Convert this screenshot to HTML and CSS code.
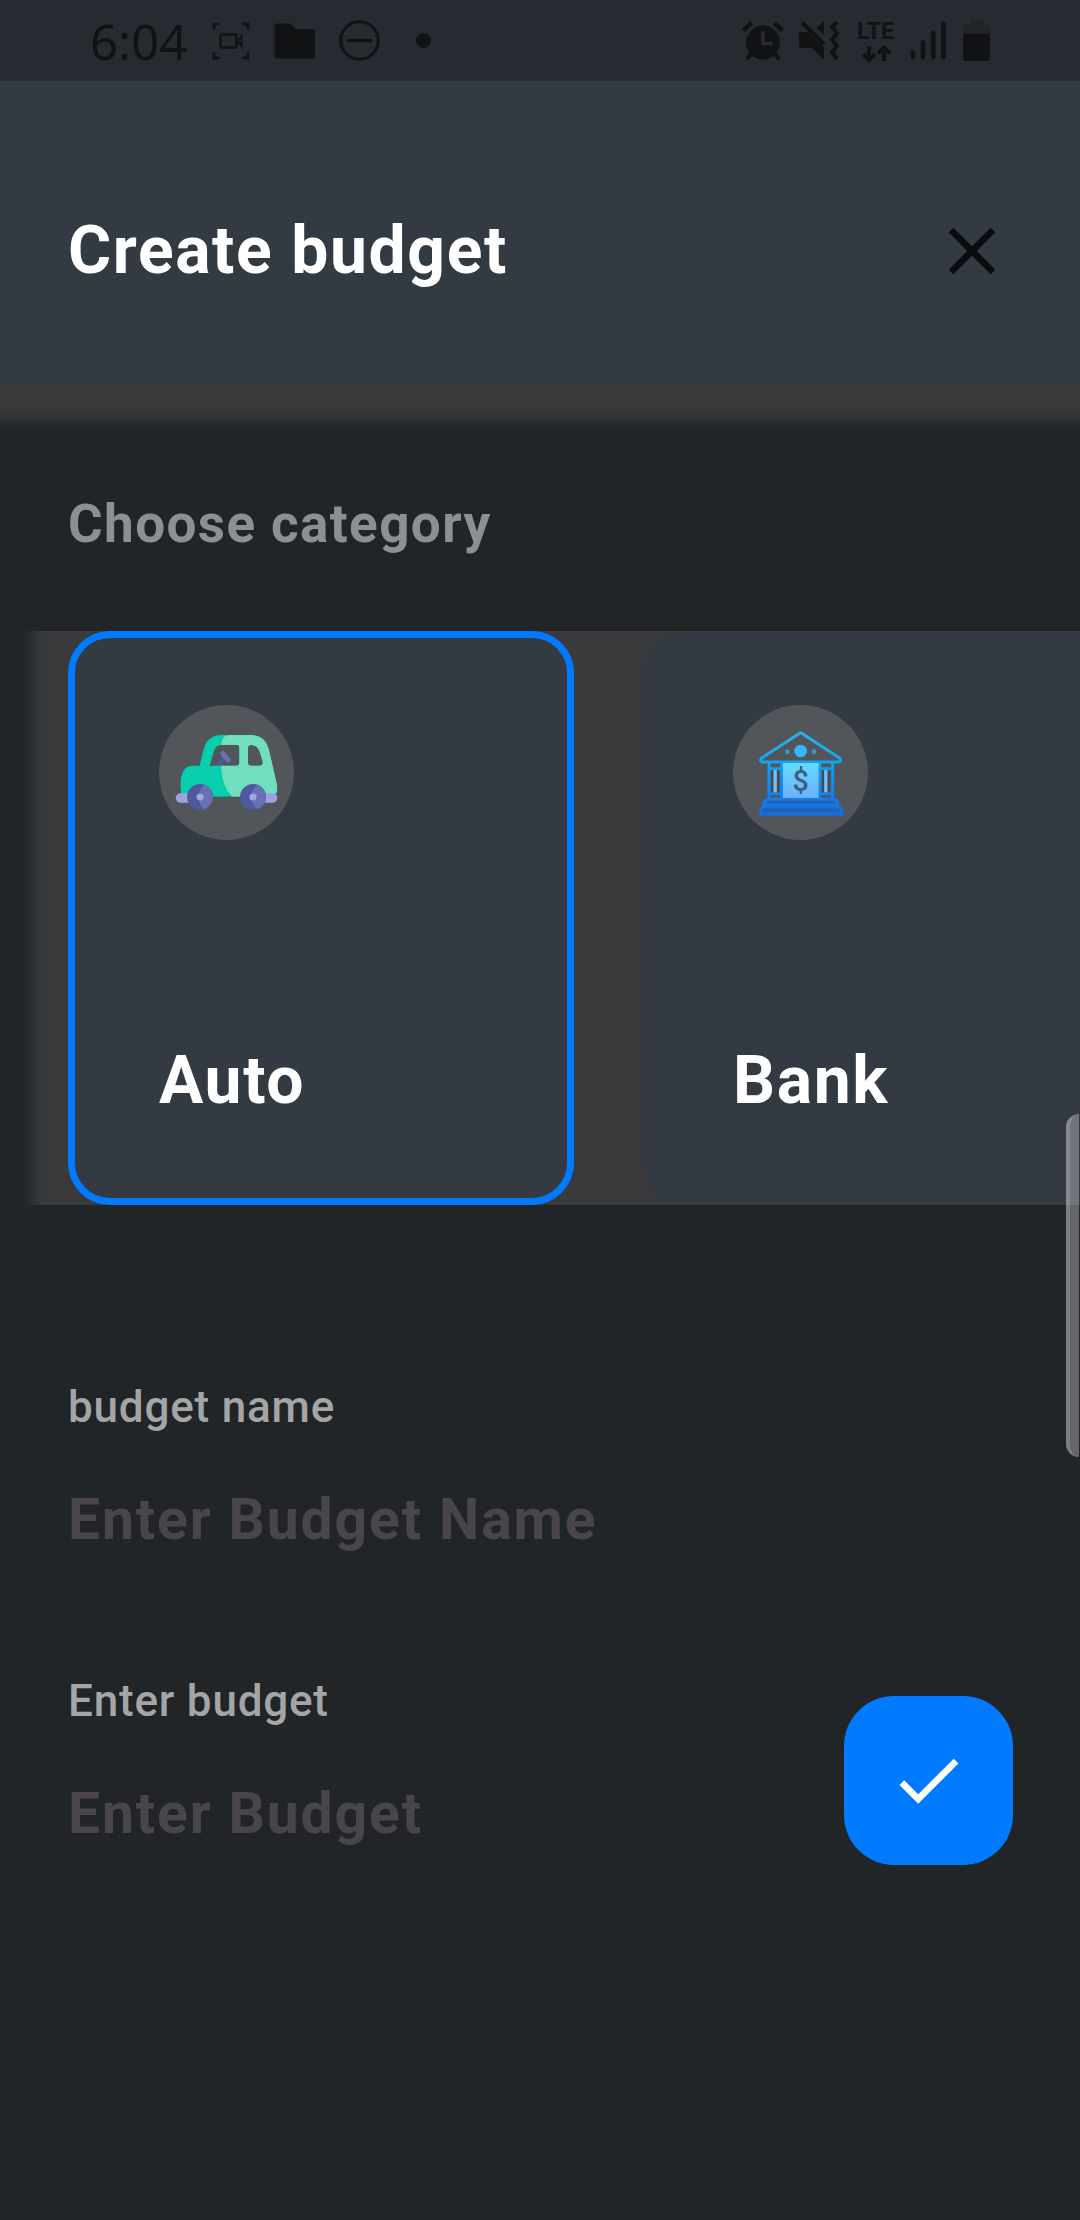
FILE: index.html
```
<!DOCTYPE html>
<html lang="en">
<head>
<meta charset="utf-8">
<title>Create budget</title>
<link rel="stylesheet" href="styles.css">
</head>
<body>
<div class="screen">
  <div class="status">
    <div class="status-group status-left">
      <span class="time">6:04</span>
      <svg width="38" height="38" viewBox="0 0 38 38" fill="none" stroke="#111214" stroke-width="3">
        <path d="M2 7.500V2H7.500M30.500 2H36V7.500M36 30.500V36H30.500M7.500 36H2V30.500"/>
        <rect x="8.500" y="12.500" width="16" height="13" rx="1.500" stroke-width="2.600"/>
        <path d="M25.500 19L29.500 14V24Z" stroke-width="2"/>
      </svg>
      <svg width="41" height="36" viewBox="0 0 41 36" fill="#111214">
        <path d="M3 .5H16.500L22 6H38Q41 6 41 9V33Q41 35.500 38 35.500H3Q.500 35.500 .500 33V3Q.500 .500 3 .500Z"/>
      </svg>
      <svg width="41" height="41" viewBox="0 0 41 41" fill="none" stroke="#111214" stroke-width="3">
        <circle cx="20.500" cy="20.500" r="18.800"/>
        <path d="M9.500 20.500H31.500" stroke-width="3.600" stroke-linecap="round"/>
      </svg>
      <span class="dot"></span>
    </div>
    <div class="status-group">
      <svg width="42" height="40" viewBox="0 0 42 40" fill="none" stroke="#111214" stroke-width="4.500">
        <circle cx="21" cy="21.500" r="17" fill="#111214" stroke="none"/>
        <path d="M1.500 9.500L9.500 2M40.500 9.500L32.500 2M9.500 33L5 38M32.500 33L37 38"/>
        <path d="M21 10V22.500H30.500" stroke="#282a32" stroke-width="3.600"/>
      </svg>
      <svg width="42" height="41" viewBox="0 0 42 41" fill="#111214">
        <path d="M1 12H9L25 27V40L13 28H3Q0 28 0 25V13Z"/>
        <path d="M3 2.500L25 24" stroke="#111214" stroke-width="4"/>
        <path d="M25 1V15L17.500 8Z"/>
        <path d="M38 2L33 7L38 13L33 19.500L38 26L33 32.500L38 39" fill="none" stroke="#111214" stroke-width="4.200"/>
      </svg>
      <div class="lte">
        <span class="lte-text">LTE</span>
        <svg width="30" height="18" viewBox="3 24 30 18" fill="none" stroke="#111214" stroke-width="4.200">
          <path d="M11 25V39M5 33L11 39L17 33M26 40V27M20 32.500L26 26.500L32 32.500"/>
        </svg>
      </div>
      <svg width="38" height="39" viewBox="0 0 38 39" stroke="#111214" stroke-width="4.800" stroke-linecap="round">
        <path d="M2.800 31.500V36M13 21.500V36M23.200 12V36M33.500 3V36"/>
      </svg>
      <svg width="27" height="41" viewBox="0 0 27 41">
        <path d="M7 0H20V5H25Q27 5 27 7V15H0V7Q0 5 2 5H7Z" fill="#212328"/>
        <path d="M0 14H27V38Q27 41 24 41H3Q0 41 0 38Z" fill="#111214"/>
      </svg>
    </div>
  </div>

  <header class="header">
    <h1 class="title">Create budget</h1>
    <svg width="80" height="80" viewBox="0 0 24 24" fill="#0a0b0d">
      <path d="M19 6.410L17.590 5 12 10.590 6.410 5 5 6.410 10.590 12 5 17.590 6.410 19 12 13.410 17.590 19 19 17.590 13.410 12z"/>
    </svg>
  </header>

  <main class="content">
    <h2 class="subtitle">Choose category</h2>
    <div class="categories">
      <div class="card card-selected">
        <svg class="badge" viewBox="476 315 405 405">
          <defs>
            <clipPath id="car-body">
              <path clip-rule="evenodd" d="M543 590L540 555Q542 498 575 497H598L608 455Q618 405 665 405H750Q795 405 806 450L830 555Q834 582 818 590ZM628 497L640 455Q646 435 662 435H710Q717 435 717 442V488Q717 497 708 497ZM743 442Q743 435 750 435C772 435 778 450 782 468L788 488Q787 497 778 497H752Q743 497 743 488Z"/>
            </clipPath>
          </defs>
          <circle cx="678.500" cy="517.500" r="202.500" fill="#525559"/>
          <path d="M648 500L673 474" stroke="#4d5a9c" stroke-width="13"/>
          <path d="M667 461L684 480" stroke="#6a70b2" stroke-width="15" stroke-linecap="round"/>
          <g clip-path="url(#car-body)">
            <rect x="530" y="400" width="310" height="200" fill="#06cfae"/>
            <path d="M685 405Q662 410 662 435V497Q664 560 697 592H840V400Z" fill="#71dfbd"/>
          </g>
          <rect x="526" y="580" width="60" height="28" rx="14" fill="#a1a0e0"/>
          <rect x="770" y="580" width="61" height="28" rx="14" fill="#a1a0e0"/>
          <circle cx="599" cy="591" r="39" fill="#4f5a9c"/>
          <path d="M611 554Q578 591 611 628A39 39 0 0 0 611 554Z" fill="#6a70b5"/>
          <circle cx="599" cy="591" r="10.500" fill="#a5a3e2"/>
          <circle cx="758" cy="591" r="39" fill="#4f5a9c"/>
          <path d="M770 554Q737 591 770 628A39 39 0 0 0 770 554Z" fill="#6a70b5"/>
          <circle cx="758" cy="591" r="10.500" fill="#a5a3e2"/>
        </svg>
        <span class="card-name">Auto</span>
      </div>
      <div class="card">
        <svg class="badge" viewBox="97 75 405 405">
          <defs>
            <linearGradient id="outline" gradientUnits="userSpaceOnUse" x1="0" y1="155" x2="0" y2="405">
              <stop offset="0" stop-color="#28b4e4"/>
              <stop offset=".45" stop-color="#129df0"/>
              <stop offset="1" stop-color="#126cec"/>
            </linearGradient>
            <linearGradient id="wall" x1="0" y1="0" x2="0" y2="1">
              <stop offset="0" stop-color="#63dcff"/>
              <stop offset="1" stop-color="#70aeff"/>
            </linearGradient>
          </defs>
          <circle cx="299.500" cy="277.500" r="202.500" fill="#525559"/>
          <g fill="none" stroke="url(#outline)" stroke-width="9" stroke-linejoin="round">
            <path d="M295 161Q300 157 305 161L418 235Q424 246 412 246H188Q176 246 182 235Z"/>
            <path d="M205 248V356M243 248V356M358 248V356M396 248V356M205 266H243M205 341H243M358 266H396M358 341H396"/>
            <path d="M190 376Q190 358 204 358H398Q411 358 411 376Z" fill="#2561ad"/>
            <path d="M180 403Q180 379 194 379H408Q424 379 424 403Z" fill="#2561ad"/>
          </g>
          <path d="M215 270V337M232 270V337M367 270V337M384 270V337" stroke="#3a4a5c" stroke-width="5"/>
          <path d="M223.500 270V337M375.500 270V337" stroke="#7dbcf2" stroke-width="10"/>
          <circle cx="300" cy="213" r="19" fill="#35b5fa"/>
          <circle cx="260" cy="215" r="7" fill="#2a9fd6"/>
          <circle cx="340" cy="215" r="7" fill="#2a9fd6"/>
          <rect x="247" y="249" width="107" height="105" fill="url(#wall)"/>
          <text class="dollar" x="300" y="333">$</text>
        </svg>
        <span class="card-name">Bank</span>
      </div>
    </div>

    <div class="form">
      <label class="field">
        <span class="label">budget name</span>
        <span class="hint">Enter Budget Name</span>
      </label>
      <label class="field">
        <span class="label">Enter budget</span>
        <span class="hint">Enter Budget</span>
      </label>
    </div>
  </main>

  <div class="fab">
    <svg width="80.500" height="80.500" viewBox="0 0 24 24" fill="#fff">
      <path d="M9 16.170L4.830 12l-1.420 1.410L9 19 21 7l-1.410-1.410z"/>
    </svg>
  </div>
  <div class="edge-handle"></div>
</div>
</body>
</html>
```
FILE: styles.css
```
* { box-sizing: border-box; }

body {
  margin: 0;
  background: #222527;
  font-family: Roboto, sans-serif;
}

h1, h2 { margin: 0; }
svg { display: block; flex: none; }

.screen {
  position: relative;
  width: 1080px;
  height: 2220px;
  overflow: hidden;
  background: #222527;
}

.status {
  display: flex;
  justify-content: space-between;
  align-items: center;
  height: 81px;
  padding: 0 90px;
  background: #282a32;
}

.status-group {
  display: flex;
  align-items: center;
  gap: 15px;
}

.status-left { gap: 24px; }

.time {
  width: 98px;
  font: 400 49px/80px "Noto Sans", sans-serif;
  color: #111214;
}

.dot {
  width: 15px;
  height: 15px;
  margin-left: 12px;
  border-radius: 50%;
  background: #111214;
}

.lte {
  display: flex;
  flex-direction: column;
  align-items: center;
  width: 39px;
}

.lte-text {
  font: 700 23px/26px Roboto, sans-serif;
  color: #111214;
}

.header {
  display: flex;
  align-items: center;
  justify-content: space-between;
  height: 303px;
  padding: 36px 68px 0;
  background: #343a42;
}

.title {
  font-size: 66px;
  line-height: 80px;
  font-weight: 700;
  letter-spacing: 1.6px;
  color: #fff;
}

.content {
  padding-top: 108px;
  background: linear-gradient(#3a393b 0, #3a393b 20px, #37383a 27px, #2f3133 34px, #262a2b 41px, #222527 48px);
}

.subtitle {
  padding: 0 68px;
  font-size: 53px;
  line-height: 64px;
  font-weight: 700;
  letter-spacing: 1.4px;
  color: #8e8f91;
}

.categories {
  display: flex;
  gap: 68px;
  height: 574px;
  margin-top: 75px;
  padding-left: 68px;
  overflow: hidden;
  background: linear-gradient(90deg, #222527 21px, #292c2e 30px, #35393a 39px, #3a393b 50px);
}

.card {
  flex: none;
  display: flex;
  flex-direction: column;
  width: 506px;
  height: 574px;
  padding: 74px 91px 0;
  border-radius: 42px;
  background: #343a42;
}

.card-selected {
  padding: 67px 84px 0;
  border: 7px solid #007bff;
}

.badge {
  width: 135px;
  height: 135px;
}

.dollar {
  font: 500 86px Roboto, sans-serif;
  text-anchor: middle;
  fill: #3a5f80;
}

.card-name {
  margin-top: 201px;
  font-size: 66px;
  line-height: 80px;
  font-weight: 700;
  letter-spacing: 1.6px;
  color: #fff;
}

.form {
  display: flex;
  flex-direction: column;
  gap: 120px;
  padding: 176px 68px 0;
}

.field {
  display: flex;
  flex-direction: column;
  gap: 53px;
}

.field + .field { margin-top: 1px; }

.label {
  font-size: 44px;
  line-height: 52px;
  font-weight: 500;
  letter-spacing: .8px;
  color: #a3a5a6;
}

.hint {
  font-size: 57px;
  line-height: 68px;
  font-weight: 700;
  letter-spacing: 1.9px;
  color: #49454c;
}

.fab {
  position: absolute;
  left: 844px;
  top: 1696px;
  display: flex;
  align-items: center;
  justify-content: center;
  width: 169px;
  height: 169px;
  border-radius: 50px;
  background: #007bff;
}

.edge-handle {
  position: absolute;
  right: 1px;
  top: 1114px;
  width: 13px;
  height: 343px;
  border-left: 4px solid rgba(255, 255, 255, .16);
  border-radius: 14px 0 0 14px;
  background: rgba(255, 255, 255, .3);
}
```
